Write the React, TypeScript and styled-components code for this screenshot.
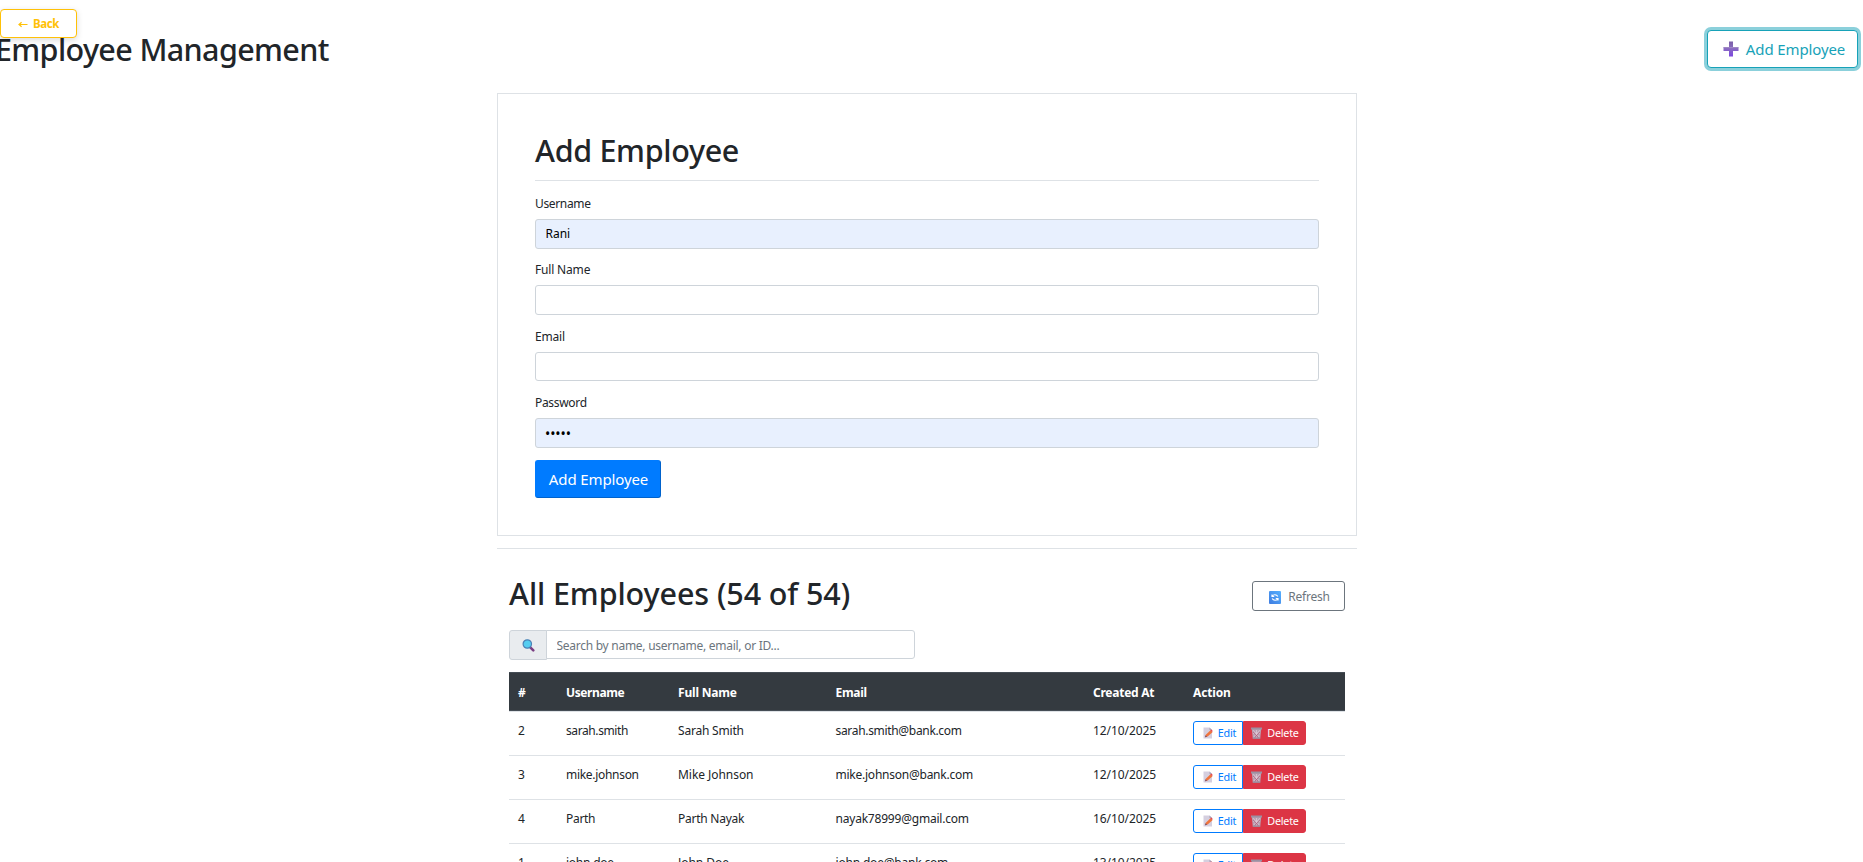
import React from 'react';
import styled, { createGlobalStyle, css } from 'styled-components';

const GlobalStyle = createGlobalStyle`
  *, *::before, *::after { box-sizing: border-box; }
  html, body { margin: 0; height: 100%; overflow: hidden; background: #fff; }
  body, input, button {
    font-family: 'Noto Sans', 'Open Sans', sans-serif;
    font-size: 12px;
    line-height: 20px;
    color: #212529;
  }
  svg { display: block; flex: none; }
`;

interface Tracked { $track?: number }
const tracking = css<Tracked>`letter-spacing: ${p => p.$track ?? 0}px;`;

const Page = styled.div`
  height: 862px;
  overflow: hidden;
`;

const PageHeader = styled.header`
  position: relative;
  display: flex;
  justify-content: space-between;
  align-items: center;
  padding: 30px 5px 25px 0;
`;

const Heading = styled.h2<Tracked>`
  margin: 0;
  font-size: 30.5px;
  font-weight: 500;
  line-height: 38px;
  white-space: nowrap;
  ${tracking}
`;

const PageTitle = styled(Heading)`
  margin-left: -5px;
`;

const Button = styled.button<Tracked>`
  display: flex;
  align-items: center;
  justify-content: center;
  padding: 0;
  border: 1px solid;
  border-radius: 3px;
  background: #fff;
  white-space: nowrap;
  ${tracking}
`;

const BackButton = styled(Button)`
  position: absolute;
  top: 9px;
  left: 0;
  gap: 5px;
  width: 77px;
  height: 29px;
  padding-top: 1px;
  border-color: #ffc107;
  border-radius: 4px;
  color: #ffc107;
  font-size: 11.5px;
  font-weight: 700;
  box-shadow: 0 2px 6px rgba(0, 0, 0, 0.15);
`;

const ToggleFormButton = styled(Button)`
  gap: 7px;
  width: 151px;
  height: 38px;
  padding-left: 3px;
  border-color: #17a2b8;
  border-radius: 4px;
  color: #17a2b8;
  font-size: 15px;
  box-shadow: 0 0 0 3px rgba(23, 162, 184, 0.5);
`;

const SubmitButton = styled(Button)`
  width: 126px;
  height: 38px;
  margin-top: 0.4px;
  padding-left: 1px;
  border-color: #007bff #0062cc #0062cc #007bff;
  background: #007bff;
  color: #fff;
  font-size: 15px;
`;

const RefreshButton = styled(Button)`
  gap: 7px;
  width: 93px;
  height: 30px;
  margin-bottom: 1px;
  padding: 2px 0 0 2px;
  border-color: #6c757d;
  color: #6c757d;
`;

const Content = styled.main`
  width: 860px;
  margin-left: 497px;
`;

const Card = styled.form`
  height: 443px;
  padding: 37px;
  border: 1px solid #dee2e6;
`;

const CardHeader = styled.div`
  height: 50px;
  margin-bottom: 13px;
  border-bottom: 1px solid #dee2e6;
`;

const Field = styled.label`
  display: flex;
  flex-direction: column;
  gap: 5px;
  margin-bottom: 11.8px;
`;

const LabelText = styled.span<Tracked>`
  ${tracking}
`;

const Input = styled.input<{ $filled?: boolean; $dots?: boolean }>`
  width: 100%;
  height: 29.6px;
  padding: 0 9.5px;
  border: 1px solid #ced4da;
  border-radius: 3px;
  background: ${p => (p.$filled ? '#e8f0fe' : '#fff')};
  color: #000;
  outline: none;
  ${p => p.$dots && css`font-size: 14px; padding: 2px 9px 0; letter-spacing: -0.1px;`}
`;

const ListSection = styled.section`
  margin-top: 12px;
  padding: 25px 12px 0;
  border-top: 1px solid #dee2e6;
`;

const ListHeader = styled.div`
  display: flex;
  justify-content: space-between;
  align-items: flex-end;
  margin-bottom: 18px;
`;

const SearchGroup = styled.div`
  display: flex;
  align-items: flex-start;
  width: 406px;
  height: 30px;
  margin-bottom: 12px;
`;

const SearchAddon = styled.span`
  display: flex;
  align-items: center;
  justify-content: center;
  width: 38px;
  height: 30px;
  border: 1px solid #ced4da;
  border-radius: 3px 0 0 3px;
  background: #e9ecef;
`;

const SearchInput = styled.input`
  flex: 1;
  height: 29px;
  padding: 2px 9.5px 0;
  margin-left: -1px;
  border: 1px solid #ced4da;
  border-radius: 0 3px 3px 0;
  letter-spacing: -0.27px;
  outline: none;
  &::placeholder { color: #6c757d; opacity: 1; }
`;

const Row = styled.div`
  display: grid;
  grid-template-columns: 48px 112px 157.5px 257.5px 100px 1fr;
  height: 44px;
  padding: 9px 0 0 9px;
  border-top: 1px solid #dee2e6;
`;

const HeadRow = styled(Row)`
  height: 39px;
  padding-top: 10px;
  border: 1px solid #454d55;
  border-width: 1px 0;
  background: #343a40;
  color: #fff;
  font-weight: 700;
`;

const Cell = styled.span<Tracked>`
  white-space: nowrap;
  ${tracking}
`;

const Actions = styled.div`
  display: flex;
`;

const EditButton = styled(Button)`
  gap: 5px;
  width: 50px;
  height: 24px;
  padding-left: 3px;
  border-color: #007bff;
  border-radius: 3px 0 0 3px;
  color: #007bff;
  font-size: 10.8px;
`;

const DeleteButton = styled(Button)`
  gap: 5px;
  width: 63px;
  height: 24px;
  padding-left: 1px;
  border-color: #dc3545;
  border-radius: 0 3px 3px 0;
  background: #dc3545;
  color: #fff;
  font-size: 10.8px;
`;

const ArrowIcon = () => (
  <svg width="10" height="8" viewBox="0 0 10 8" fill="none" stroke="#ffc107" strokeWidth="1.2">
    <path d="M9.5 4.5H1M3.6 2.3 1 4.5 3.6 6.7" />
  </svg>
);

const PlusIcon = () => (
  <svg width="16" height="16" viewBox="0 0 16 16">
    <defs>
      <linearGradient id="plusFill" x1="0" y1="0" x2="0" y2="1">
        <stop offset="0" stopColor="#7a5fa8" />
        <stop offset="0.45" stopColor="#8a6cc0" />
        <stop offset="1" stopColor="#7c46e0" />
      </linearGradient>
    </defs>
    <path d="M6 .5h4V6h5.5v4H10v5.5H6V10H.5V6H6z" fill="url(#plusFill)" />
    <path d="M.8 6.6h14.4" stroke="#a08bc4" strokeWidth="1" />
  </svg>
);

const SearchIcon = () => (
  <svg width="13" height="13" viewBox="0 0 13 13">
    <path d="m8.3 8.3 3 3" stroke="#7b3f83" strokeWidth="2.6" strokeLinecap="round" />
    <circle cx="5.3" cy="5" r="4.2" fill="#55cdf0" stroke="#4a80b5" strokeWidth="1.2" />
  </svg>
);

const RefreshIcon = () => (
  <svg width="12" height="13" viewBox="0 0 12 13">
    <defs>
      <linearGradient id="refreshFill" x1="0" y1="1" x2="1" y2="0">
        <stop offset="0" stopColor="#3f7ce0" />
        <stop offset="1" stopColor="#55b0ff" />
      </linearGradient>
    </defs>
    <rect width="12" height="13" rx="1" fill="url(#refreshFill)" />
    <path d="M3 6V3.5M3 5.5h2.2M3.3 5C4.5 3.3 7.5 3.2 8.8 5.5M9 7v2.5M9 7.5H6.8M8.7 8C7.5 9.7 4.5 9.8 3.2 7.5" fill="none" stroke="#fff" strokeWidth="1.2" />
  </svg>
);

const EditIcon = () => (
  <svg width="10" height="12" viewBox="0 0 10 12">
    <path d="M.5.5h6L9 3v8.5H.5z" fill="#d5cfdf" />
    <path d="M6.5.5 9 3H6.5z" fill="#aaa0b8" />
    <path d="M2 10.2 2.8 7.8 7.5 3.2 9.5 5.2 4.6 9.6z" fill="#f0743c" />
    <path d="m7.3 3.2 1-.8 1.5 1.5-.9 1z" fill="#e5484f" />
    <path d="m2 10.2.6-2 1.5 1.5z" fill="#76506a" />
  </svg>
);

const TrashIcon = () => (
  <svg width="11" height="12" viewBox="0 0 11 12">
    <path d="M.8 2h9.4l-1 9.8H1.8z" fill="#b9a2b3" />
    <path d="m2.2 3.2 6.2 7M8.8 3.2l-6.2 7M5.5 3v7.5M2 6.2h7" stroke="#e3ccd8" strokeWidth=".7" />
    <path d="m2.2 5 5 5.5M8.8 5l-5 5.5" stroke="#a54968" strokeWidth=".6" />
    <path d="M0 .5h11v2H0z" fill="#9c91a3" />
    <path d="M1.8 10.5h7.4v1.3H1.8z" fill="#9b8798" />
  </svg>
);

interface Employee {
  id: number;
  username: string;
  name: string;
  email: string;
  created: string;
  tracks: [number, number, number];
}

const employees: Employee[] = [
  { id: 2, username: 'sarah.smith', name: 'Sarah Smith', email: 'sarah.smith@bank.com', created: '12/10/2025', tracks: [-0.4, -0.2, -0.32] },
  { id: 3, username: 'mike.johnson', name: 'Mike Johnson', email: 'mike.johnson@bank.com', created: '12/10/2025', tracks: [-0.3, -0.05, -0.24] },
  { id: 4, username: 'Parth', name: 'Parth Nayak', email: 'nayak78999@gmail.com', created: '16/10/2025', tracks: [-0.3, -0.25, -0.21] },
  { id: 1, username: 'john.doe', name: 'John Doe', email: 'john.doe@bank.com', created: '13/10/2025', tracks: [-0.25, -0.05, -0.2] },
];

export default function App() {
  return (
    <Page>
      <GlobalStyle />
      <PageHeader>
        <PageTitle $track={-0.63}>Employee Management</PageTitle>
        <ToggleFormButton $track={-0.12}><PlusIcon />Add Employee</ToggleFormButton>
        <BackButton $track={-0.35}><ArrowIcon />Back</BackButton>
      </PageHeader>
      <Content>
        <Card>
          <CardHeader><Heading $track={-0.32}>Add Employee</Heading></CardHeader>
          <Field><LabelText $track={-0.35}>Username</LabelText><Input $filled defaultValue="Rani" /></Field>
          <Field><LabelText $track={-0.17}>Full Name</LabelText><Input /></Field>
          <Field><LabelText $track={-0.2}>Email</LabelText><Input /></Field>
          <Field><LabelText $track={-0.32}>Password</LabelText><Input $filled $dots defaultValue="•••••" /></Field>
          <SubmitButton type="button" $track={-0.12}>Add Employee</SubmitButton>
        </Card>
        <ListSection>
          <ListHeader>
            <Heading $track={-0.1}>All Employees (54 of 54)</Heading>
            <RefreshButton $track={-0.2}><RefreshIcon />Refresh</RefreshButton>
          </ListHeader>
          <SearchGroup>
            <SearchAddon><SearchIcon /></SearchAddon>
            <SearchInput placeholder="Search by name, username, email, or ID..." />
          </SearchGroup>
          <HeadRow>
            <Cell>#</Cell>
            <Cell $track={-0.4}>Username</Cell>
            <Cell $track={-0.18}>Full Name</Cell>
            <Cell $track={-0.3}>Email</Cell>
            <Cell $track={-0.25}>Created At</Cell>
            <Cell $track={-0.15}>Action</Cell>
          </HeadRow>
          {employees.map(e => (
            <Row key={e.id}>
              <Cell>{e.id}</Cell>
              <Cell $track={e.tracks[0]}>{e.username}</Cell>
              <Cell $track={e.tracks[1]}>{e.name}</Cell>
              <Cell $track={e.tracks[2]}>{e.email}</Cell>
              <Cell $track={-0.08}>{e.created}</Cell>
              <Actions>
                <EditButton $track={-0.25}><EditIcon />Edit</EditButton>
                <DeleteButton $track={-0.25}><TrashIcon />Delete</DeleteButton>
              </Actions>
            </Row>
          ))}
        </ListSection>
      </Content>
    </Page>
  );
}
